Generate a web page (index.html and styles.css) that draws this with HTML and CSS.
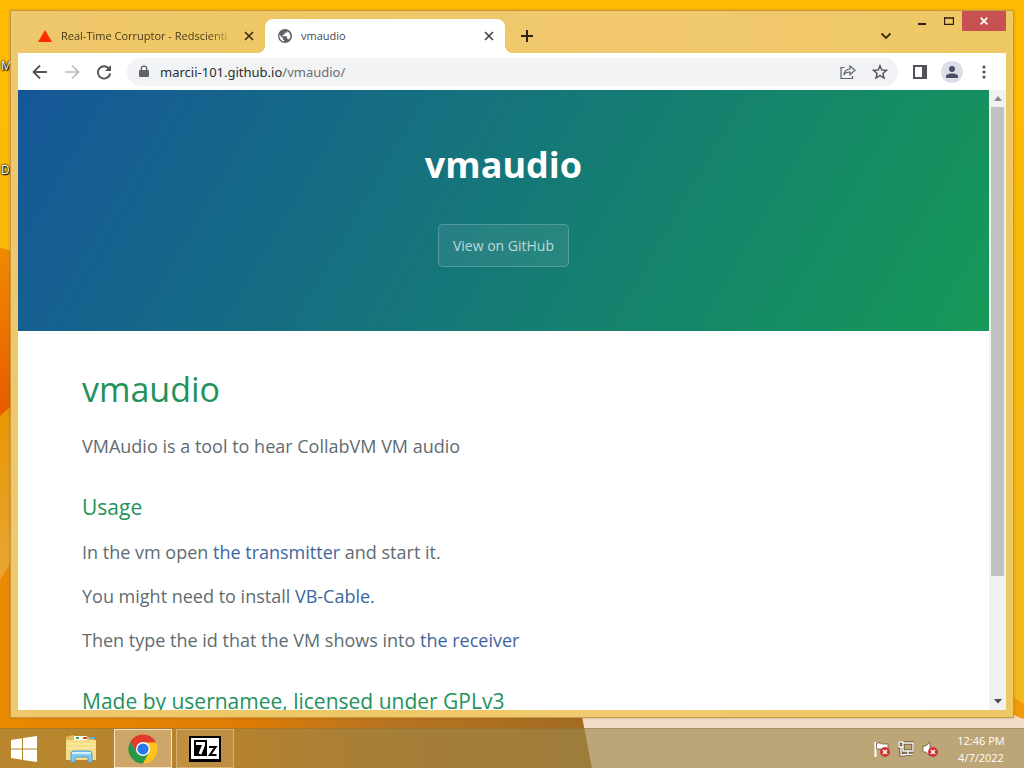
FILE: index.html
```html
<!DOCTYPE html>
<html lang="en">
<head>
<meta charset="utf-8">
<title>vmaudio</title>
<link rel="stylesheet" href="styles.css">
</head>
<body>
<div class="desktop">
  <svg class="wallpaper" viewBox="0 0 1024 768" preserveAspectRatio="none" aria-hidden="true">
    <defs>
      <linearGradient id="sky" x1="0" y1="0" x2="0" y2="1"><stop offset="0" stop-color="#ffbb00"/><stop offset="1" stop-color="#f0b820"/></linearGradient>
      <linearGradient id="flame" x1="0" y1="0" x2="0" y2="1"><stop offset="0" stop-color="#f08a00"/><stop offset="1" stop-color="#e85a00"/></linearGradient>
      <linearGradient id="petal" x1="0" y1="0" x2="0" y2="1"><stop offset="0" stop-color="#e89600"/><stop offset="1" stop-color="#e8a636"/></linearGradient>
      <linearGradient id="floor" x1="0" y1="0" x2="1" y2="0"><stop offset="0" stop-color="#ea8a00"/><stop offset=".4" stop-color="#e07c04"/><stop offset=".65" stop-color="#b87420"/><stop offset="1" stop-color="#a26c22"/></linearGradient>
    </defs>
    <rect width="1024" height="768" fill="url(#sky)"/>
    <path d="M0 248Q8 248 18 256V404L0 418Z" fill="url(#flame)"/>
    <path d="M0 416L18 400V560L0 582Z" fill="url(#petal)"/>
    <path d="M0 580L18 550V700H579L592 768H0Z" fill="url(#floor)"/>
    <path d="M579 700H1000L1024 718V768H592Z" fill="#f3dcc9"/>
    <path d="M1008 694L1024 704V719Q1014 717 1008 709Z" fill="#f39a08"/>
  </svg>
  <span class="shortcut shortcut-top">M</span>
  <span class="shortcut shortcut-bottom">D</span>

  <div class="stage">
    <div class="window">
      <header class="titlebar">
        <div class="tabs">
          <div class="tab">
            <svg class="favicon" width="16" height="16" viewBox="0 0 16 16"><path d="M8 2L15 14H1Z" fill="#ff2a00"/></svg>
            <span class="tab-title fade">Real-Time Corruptor - Redscienti</span>
            <button class="tab-close" aria-label="Close Real-Time Corruptor tab"><svg width="10" height="10" viewBox="0 0 10 10"><path d="M1 1L9 9M9 1L1 9" stroke="#3d2e12" stroke-width="1.7"/></svg></button>
          </div>
          <div class="tab active">
            <svg class="favicon" width="16" height="16" viewBox="0 0 24 24"><path fill="#5f6368" d="M12 1.500a10.500 10.500 0 1 0 0 21a10.500 10.500 0 0 0 0-21zM10.800 20.300A8.400 8.400 0 0 1 3.800 10.200L8.800 15.200V16.300a2 2 0 0 0 2 2zM18 17.700a2 2 0 0 0-1.900-1.400h-1v-3a1 1 0 0 0-1-1H8.500v-2h2a1 1 0 0 0 1-1v-2h2a2 2 0 0 0 2-2v-.4A8.400 8.400 0 0 1 18 17.700z"/></svg>
            <span class="tab-title">vmaudio</span>
            <button class="tab-close" aria-label="Close vmaudio tab"><svg width="10" height="10" viewBox="0 0 10 10"><path d="M1 1L9 9M9 1L1 9" stroke="#3c4043" stroke-width="1.600"/></svg></button>
          </div>
          <button class="new-tab" aria-label="New tab"><svg width="12" height="12" viewBox="0 0 12 12"><path d="M6 0V12M0 6H12" stroke="#2e2310" stroke-width="2"/></svg></button>
        </div>
        <button class="tab-search" aria-label="Search tabs"><svg width="12" height="8" viewBox="0 0 12 8"><path d="M1.500 1.500L6 6L10.500 1.500" fill="none" stroke="#3a2b10" stroke-width="1.800"/></svg></button>
        <div class="window-controls">
          <button aria-label="Minimize"><svg width="10" height="10" viewBox="0 0 10 10"><path d="M1 8H9" stroke="#2e1c0c" stroke-width="2"/></svg></button>
          <button aria-label="Maximize"><svg width="10" height="8" viewBox="0 0 10 8"><path d="M.5 1H9.500M.5 0V8M9.500 0V8M0 7.500H10" stroke="#2e1c0c" stroke-width="1.300"/></svg></button>
          <button class="close" aria-label="Close"><svg width="8" height="8" viewBox="0 0 8 8"><path d="M.7.7L7.300 7.300M7.300.7L.7 7.300" stroke="#fff" stroke-width="1.700"/></svg></button>
        </div>
      </header>

      <div class="client">
        <nav class="toolbar">
          <button class="tool" aria-label="Back"><svg width="16" height="16" viewBox="0 0 16 16"><path d="M15 8H2M8 1.500L1.500 8L8 14.500" fill="none" stroke="#505458" stroke-width="1.800"/></svg></button>
          <button class="tool" aria-label="Forward"><svg width="16" height="16" viewBox="0 0 16 16"><path d="M1 8H14M8 1.500L14.500 8L8 14.500" fill="none" stroke="#b9bbbe" stroke-width="1.700"/></svg></button>
          <button class="tool" aria-label="Reload"><svg width="16" height="16" viewBox="0 0 16 16"><path d="M13.300 5A6.200 6.200 0 1 0 14.200 9.500" fill="none" stroke="#505458" stroke-width="1.900"/><path d="M15 1V7H9Z" fill="#505458"/></svg></button>
          <div class="omnibox">
            <svg width="10" height="14" viewBox="0 0 10 14"><path d="M1 5H9A1 1 0 0 1 10 6V11A1 1 0 0 1 9 12H1A1 1 0 0 1 0 11V6A1 1 0 0 1 1 5Z" fill="#5f6368"/><path d="M2.300 5.500V3.800A2.700 2.700 0 0 1 7.700 3.800V5.500" fill="none" stroke="#5f6368" stroke-width="1.300"/></svg>
            <a class="address" href="#">marcii-101.github.io<span>/vmaudio/</span></a>
            <button class="tool" aria-label="Share"><svg width="16" height="16" viewBox="0 0 16 16"><path d="M4.500 3.500H1V14.500H12.500V12M10 5V2L15 6.300L10 10.600V8C7 8 5 9 3.800 11C4.200 7.800 6.200 5.300 10 5Z" fill="none" stroke="#5f6368" stroke-width="1.200"/></svg></button>
            <button class="tool" aria-label="Bookmark this page"><svg width="16" height="16" viewBox="0 0 16 16"><path d="M8 1.700L9.800 6L14.500 6.400L10.900 9.500L12 14.100L8 11.600L4 14.100L5.100 9.500L1.500 6.400L6.200 6Z" fill="none" stroke="#505458" stroke-width="1.400"/></svg></button>
          </div>
          <button class="tool" aria-label="Side panel"><svg width="14" height="14" viewBox="0 0 14 14"><path d="M1 1H13V13H1Z" fill="#fff" stroke="#505458" stroke-width="2"/><path d="M9 0H14V14H9Z" fill="#505458"/></svg></button>
          <button class="tool avatar" aria-label="Profile"><svg width="14" height="14" viewBox="0 0 14 14"><circle cx="7" cy="4" r="3" fill="#475067"/><path d="M1 13V11C1 7.500 13 7.500 13 11V13Z" fill="#475067"/></svg></button>
          <button class="tool" aria-label="Menu"><svg width="4" height="14" viewBox="0 0 4 14" fill="#505458"><circle cx="2" cy="2" r="1.600"/><circle cx="2" cy="7" r="1.600"/><circle cx="2" cy="12" r="1.600"/></svg></button>
        </nav>

        <div class="viewport">
          <div class="page">
            <section class="hero">
              <h1>vmaudio</h1>
              <a class="hero-button" href="#">View on GitHub</a>
            </section>
            <main class="content">
              <h1>vmaudio</h1>
              <p>VMAudio is a tool to hear CollabVM VM audio</p>
              <h3>Usage</h3>
              <p>In the vm open <a href="#">the transmitter</a> and start it.</p>
              <p>You might need to install <a href="#">VB-Cable.</a></p>
              <p>Then type the id that the VM shows into <a href="#">the receiver</a></p>
              <h3>Made by usernamee, licensed under GPLv3</h3>
            </main>
          </div>
          <div class="scrollbar">
            <button aria-label="Scroll up"><svg width="8" height="5" viewBox="0 0 8 5"><path d="M4 0L8 5H0Z" fill="#8b8b8b"/></svg></button>
            <div class="track"><div class="thumb"></div></div>
            <button aria-label="Scroll down"><svg width="8" height="5" viewBox="0 0 8 5"><path d="M0 0H8L4 4.500Z" fill="#4c4c4c"/></svg></button>
          </div>
        </div>
      </div>
    </div>
  </div>

  <footer class="taskbar">
    <button class="start" aria-label="Start"><svg width="28" height="26" viewBox="0 0 28 26" fill="#fff"><path d="M1 4L12 2.300V12.500H1ZM13 2.100L27 0V12.500H13ZM1 13.500H12V23.700L1 22ZM13 13.500H27V26L13 23.900Z"/></svg></button>
    <button class="task" aria-label="File Explorer"><svg width="34" height="30" viewBox="0 0 34 30"><path d="M2 3L9 1L12 3H30V25H2Z" fill="#e3bd57"/><path d="M10 2H23V7H10Z" fill="#fff"/><path d="M12 4H15" stroke="#3c9952" stroke-width="2"/><path d="M19 4H23" stroke="#cf4930" stroke-width="2"/><path d="M25 4H31" stroke="#5aaddd" stroke-width="2"/><path d="M2 6H32V26H2Z" fill="#f6dd86"/><path d="M3 10H31M3 14H31" stroke="#fff0b4"/><path d="M7 28V20Q7 17 10 17H25Q28 17 28 20V28H24V23H11V28Z" fill="#84c9ee" stroke="#4ba2d8"/><path d="M8 19H27" stroke="#d2f1ff" stroke-width="2"/></svg></button>
    <button class="task open current" aria-label="Google Chrome"><svg width="30" height="30" viewBox="0 0 30 30"><path d="M15 15L2.400 7.700A14.500 14.500 0 0 1 27.600 7.700Z" fill="#e23b2e"/><path d="M2.400 7.700A14.500 14.500 0 0 0 15 29.500L21 18.500L15 15L9 18.500Z" fill="#279847"/><path d="M27.600 7.700A14.500 14.500 0 0 1 15 29.500L21.200 18.600L15 8Z" fill="#fcc41b"/><path d="M2.400 7.700H27.600L28 8.500H15L9 18.500Z" fill="#e23b2e"/><circle cx="15" cy="15" r="7" fill="#fff"/><circle cx="15" cy="15" r="5.600" fill="#287ae8"/></svg></button>
    <button class="task open" aria-label="7-Zip"><svg width="32" height="26" viewBox="0 0 32 26"><path d="M0 0H32V26H0Z" fill="#000"/><path d="M2 2H30V23H2Z" fill="#fff"/><path d="M5 4H18V20H5Z" fill="#000"/><path d="M7 7.500H14.500V9L11 18" fill="none" stroke="#fff" stroke-width="3"/><path d="M20 11H26.500L21 19H27.500" fill="none" stroke="#000" stroke-width="2.200"/></svg></button>
    <div class="tray">
      <svg width="16" height="16" viewBox="0 0 16 16"><path d="M1.500 1V16" stroke="#fff" stroke-width="2"/><path d="M2.500 2H7L8 3H14V9H8L7 8H2.500Z" fill="#fff" stroke="#5b4932" stroke-width=".7"/><circle cx="11" cy="11" r="5" fill="#cc3838"/><path d="M9 9L13 13M13 9L9 13" stroke="#fff" stroke-width="1.500"/></svg>
      <svg width="16" height="16" viewBox="0 0 16 16"><path d="M5 2H15V10H5ZM10 10V13M6 13.500H14M3 6V14H7M1 1H5V6H1Z" fill="none" stroke="#564630" stroke-width="3"/><path d="M5 2H15V10H5ZM10 10V13M6 13.500H14M3 6V14H7M1 1H5V6H1Z" fill="none" stroke="#fff" stroke-width="1.400"/></svg>
      <svg width="16" height="16" viewBox="0 0 16 16"><path d="M1 5H4L8 1V15L4 11H1Z" fill="#fff" stroke="#5b4932" stroke-width=".7"/><circle cx="11" cy="11" r="5" fill="#cc3838"/><path d="M9 9L13 13M13 9L9 13" stroke="#fff" stroke-width="1.500"/></svg>
    </div>
    <div class="clock"><span>12:46 PM</span><span>4/7/2022</span></div>
  </footer>
</div>
</body>
</html>
```
FILE: styles.css
```css
* { box-sizing: border-box; }
body { margin: 0; font-family: "Open Sans", "Noto Sans", sans-serif; }
button { border: 0; padding: 0; background: none; font: inherit; display: flex; align-items: center; justify-content: center; }
svg { display: block; flex: none; }
a { text-decoration: none; }

.desktop { position: relative; height: 100vh; display: flex; flex-direction: column; overflow: hidden; }
.wallpaper { position: absolute; inset: 0; width: 100%; height: 100%; }
.shortcut { position: absolute; left: 1px; font-size: 12px; line-height: 16px; color: #fff; text-shadow: 1px 1px 1px #000, 0 0 2px #000, 0 0 2px #000; }
.shortcut-top { top: 58px; }
.shortcut-bottom { top: 162px; }

.stage { position: relative; flex: 1; min-height: 0; padding: 10px 10px; display: flex; }
.window { flex: 1; min-width: 0; display: flex; flex-direction: column; padding: 0 7px 7px; background: linear-gradient(90deg, #efc76c, #eec865 30%, #f1c870 60%, #eec864); border: 1px solid #c89743; box-shadow: 0 0 3px rgba(120, 80, 0, .3); }

.titlebar { height: 42px; display: flex; align-items: flex-start; color: #4b3a18; }
.tabs { flex: 1; min-width: 0; display: flex; padding: 8px 0 0 7px; }
.tab { width: 240px; height: 34px; display: flex; align-items: center; gap: 8px; padding: 0 10px 0 12px; font-size: 11px; line-height: 16px; }
.tab-title { flex: 1; min-width: 0; overflow: hidden; white-space: nowrap; }
.fade { -webkit-mask-image: linear-gradient(90deg, #000 85%, transparent); mask-image: linear-gradient(90deg, #000 85%, transparent); }
.tab-close { width: 12px; height: 16px; }
.active { position: relative; background: #fff; color: #45494d; border-radius: 8px 8px 0 0; }
.active::before, .active::after { content: ""; position: absolute; bottom: 0; width: 8px; height: 8px; }
.active::before { right: 100%; background: radial-gradient(circle at 0 0, transparent 8px, #fff 8px); }
.active::after { left: 100%; background: radial-gradient(circle at 100% 0, transparent 8px, #fff 8px); }
.new-tab { width: 28px; height: 34px; margin-left: 8px; }
.tab-search { width: 28px; height: 28px; margin: 11px 8px 0 0; }
.window-controls { display: flex; }
.window-controls button { width: 27px; height: 20px; }
.window-controls .close { width: 44px; background: #c75050; }

.client { flex: 1; min-height: 0; display: flex; flex-direction: column; background: #fff; }
.toolbar { height: 37px; display: flex; align-items: center; gap: 4px; padding: 0 8px; }
.tool { width: 28px; height: 28px; flex: none; }
.omnibox { flex: 1; min-width: 0; height: 28px; margin: 0 4px 0 5px; padding: 0 4px 0 12px; display: flex; align-items: center; gap: 4px; border-radius: 14px; background: #f1f3f4; }
.address { flex: 1; margin-left: 7px; font-family: "Noto Sans", "Open Sans", sans-serif; font-size: 13px; line-height: 20px; color: #292c30; }
.address span { color: #6a6e72; }
.avatar { width: 22px; height: 22px; margin: 0 3px; border-radius: 50%; background: #dcdfe7; }

.viewport { flex: 1; min-height: 0; display: flex; }
.page { flex: 1; min-width: 0; overflow: hidden; }
.hero { padding: 48px 64px 64px; text-align: center; color: #fff; background: linear-gradient(120deg, #155799, #159957); }
.hero h1 { margin: 0 0 32px; font-size: 36px; line-height: 54px; font-weight: 700; }
.hero-button { display: inline-block; padding: 10px 14px; border: 1px solid rgba(255, 255, 255, .2); border-radius: 5px; background: rgba(255, 255, 255, .08); color: rgba(255, 255, 255, .7); font-size: 14px; line-height: 21px; vertical-align: top; }
.content { padding: 32px 64px; color: #606c71; font-size: 18px; line-height: 28px; }
.content h1 { margin: 0 0 16px; font-size: 34px; line-height: 53px; font-weight: 400; color: #23925a; }
.content h3 { margin: 32px 0 16px; font-size: 21px; line-height: 30px; font-weight: 400; color: #23925a; }
.content p { margin: 0 0 16px; }
.content a { color: #3d66a0; }

.scrollbar { width: 17px; display: flex; flex-direction: column; background: #f1f1f1; }
.scrollbar button { height: 17px; }
.track { flex: 1; padding: 0 2px; }
.thumb { height: 80%; background: #c1c1c1; }

.taskbar { position: relative; height: 40px; display: flex; align-items: stretch; background: rgba(156, 133, 71, .63); border-top: 1px solid rgba(130, 100, 50, .3); }
.start { width: 48px; }
.task { width: 58px; margin-right: 4px; }
.start + .task { margin-left: 4px; }
.open { border: 1px solid rgba(240, 210, 150, .5); background: rgba(225, 190, 140, .22); }
.current { border-color: #f5e4c6; background: rgba(225, 195, 155, .55); }
.tray { margin-left: auto; display: flex; align-items: center; gap: 8px; }
.clock { width: 86px; display: flex; flex-direction: column; align-items: center; justify-content: center; font-size: 11px; line-height: 17px; color: #fff; }
```
